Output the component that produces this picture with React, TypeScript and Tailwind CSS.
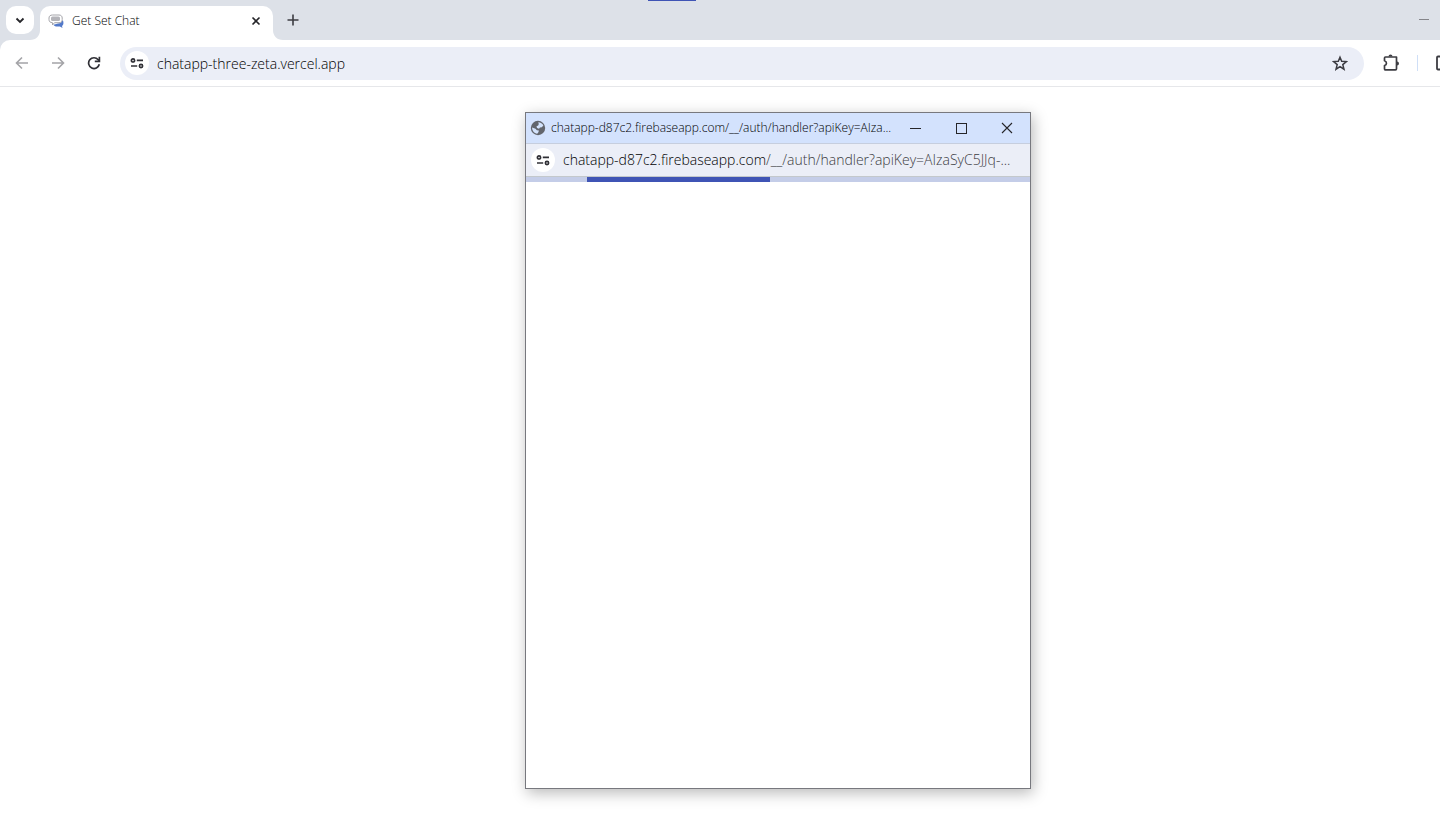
import { type ReactNode } from "react";

function IconButton({ label, className = "", children }: { label: string; className?: string; children: ReactNode }) {
  return (
    <button type="button" aria-label={label} className={`flex shrink-0 items-center justify-center ${className}`}>
      {children}
    </button>
  );
}

function TuneIcon() {
  return (
    <svg width="14" height="14" viewBox="0 0 14 14" fill="none" stroke="#303036" strokeWidth="1.7">
      <circle cx="3" cy="4.4" r="1.6" />
      <path d="M6.800 4.400h6.200M1 10h6.200" />
      <circle cx="11" cy="10" r="1.6" />
    </svg>
  );
}

function ChatIcon() {
  return (
    <svg width="16" height="16" viewBox="0 0 16 16" fill="none">
      <path d="M10 10.500c2.500 0 4-1.200 4.600-3.500.7.800.9 2 .8 3.500-.1 1.300-.6 2-1.400 2.400l.5 2.100-2.600-1.500H9c-1.600 0-3-.6-3.500-1.800z" fill="#5279c9" />
      <path d="M4.500 2H11c2 0 3.200 1.200 3.200 3v1.500c0 2-1.200 3.200-3.200 3.200H6.500L4.500 12V9.700C2.200 9.700 1 8.500 1 6.500V5c0-1.800 1.200-3 3.500-3z" fill="#fff" stroke="#a5a5aa" />
      <rect x="3" y="3.500" width="9" height="4.500" rx="1.500" fill="#b4b4b9" />
    </svg>
  );
}

function GlobeIcon() {
  return (
    <svg className="shrink-0" width="16" height="16" viewBox="0 0 16 16">
      <circle cx="8" cy="8" r="7.2" fill="#62656c" />
      <path d="M8.200 2.200c2.300 0 4.500 1.400 5.200 3.300L11.800 7.200l-1.800.2-1 1.300-2-.7-.5-1.700 1.700-.8.600-1.400z" fill="#d3e3fd" />
      <path d="M2.100 7.500 5.500 8.700l1.400 1.600 2 .3-.5 1.700-1.200 1.500C4.300 13.400 2 10.800 2.100 7.500z" fill="#d3e3fd" />
    </svg>
  );
}

function TabStrip() {
  return (
    <div className="flex h-10 items-end bg-[#dde1e8]">
      <IconButton label="Search tabs" className="mb-1.5 ml-1.5 size-7 rounded-[10px] bg-white">
        <svg width="10" height="7" viewBox="0 0 10 7" fill="none" stroke="#252529" strokeWidth="1.8">
          <path d="m1.500 1.500 3.500 3.500 3.500-3.500" />
        </svg>
      </IconButton>
      <div className="relative ml-1.5 flex h-[34px] w-[233px] shrink-0 items-center rounded-t-[10px] bg-white pb-1 pl-2 pr-2.5">
        <svg className="absolute -left-2.5 bottom-0" width="10" height="10" viewBox="0 0 10 10">
          <path d="M10 0v10H0C6 10 10 6 10 0z" fill="#fff" />
        </svg>
        <svg className="absolute -right-2.5 bottom-0" width="10" height="10" viewBox="0 0 10 10">
          <path d="M0 0v10h10C4 10 0 6 0 0z" fill="#fff" />
        </svg>
        <ChatIcon />
        <span className="ml-2 flex-1 truncate text-[12px] font-light leading-4 text-black">Get Set Chat</span>
        <IconButton label="Close tab" className="size-3.5">
          <svg width="10" height="10" viewBox="0 0 10 10" fill="none" stroke="#252529" strokeWidth="1.6">
            <path d="m1.500 1.500 7 7m0-7-7 7" />
          </svg>
        </IconButton>
      </div>
      <IconButton label="New tab" className="mb-3 ml-3 size-4">
        <svg width="12" height="12" viewBox="0 0 12 12" fill="none" stroke="#3c3c42" strokeWidth="1.6">
          <path d="M6 .5v11M.5 6h11" />
        </svg>
      </IconButton>
      <IconButton label="Minimize" className="mb-3 ml-auto mr-2 size-4">
        <svg width="10" height="2" viewBox="0 0 10 2">
          <path d="M0 .5h10" stroke="#85858a" />
        </svg>
      </IconButton>
    </div>
  );
}

function Toolbar() {
  return (
    <div className="bg-[#dde1e8]">
      <div className="flex h-[47px] items-center overflow-hidden rounded-tl-[10px] border-b border-[#e6e7ea] bg-white">
        <IconButton label="Back" className="ml-3.5 size-4">
          <svg width="14" height="14" viewBox="0 0 14 14" fill="none" stroke="#a4a4a8" strokeWidth="1.6">
            <path d="M13 7H2m5-5.500L1.500 7 7 12.500" />
          </svg>
        </IconButton>
        <IconButton label="Forward" className="ml-5 size-4">
          <svg width="14" height="14" viewBox="0 0 14 14" fill="none" stroke="#a4a4a8" strokeWidth="1.6">
            <path d="M1 7h11M7 1.500 12.500 7 7 12.500" />
          </svg>
        </IconButton>
        <IconButton label="Reload" className="ml-5 size-4">
          <svg width="14" height="14" viewBox="0 0 14 14" fill="none" stroke="#303036" strokeWidth="1.7">
            <path d="M12.300 8.300A5.400 5.400 0 1 1 11.200 3.700L12.500 5" />
            <path d="M12.400.8v4.600H7.800" />
          </svg>
        </IconButton>
        <div className="ml-[18px] flex h-[33px] flex-1 items-center rounded-full bg-[#ebeef7] pl-[5px] pr-4">
          <IconButton label="View site information" className="size-6 rounded-full bg-white">
            <TuneIcon />
          </IconButton>
          <input
            aria-label="Address"
            className="ml-2 min-w-0 flex-1 bg-transparent pt-0.5 text-[14px] font-light leading-5 text-black outline-none"
            defaultValue="chatapp-three-zeta.vercel.app"
          />
          <IconButton label="Bookmark this tab" className="size-4">
            <svg width="16" height="16" viewBox="0 0 16 16" fill="none" stroke="#3c3c42" strokeWidth="1.500">
              <path d="m8 2.200 1.700 4.100 4.700.3-3.600 3 1.200 4.600-4-2.600-4 2.600 1.200-4.600-3.600-3 4.700-.3z" />
            </svg>
          </IconButton>
        </div>
        <div className="flex w-[76px] shrink-0 items-center overflow-hidden">
          <IconButton label="Extensions" className="ml-[18px] size-[18px]">
            <svg width="18" height="18" viewBox="0 0 18 18" fill="none" stroke="#3c3c42" strokeWidth="1.700">
              <path d="M3.500 3h11v11.800c0 .6-.4 1-1 1h-10c-.6 0-1-.4-1-1v-3.300c2.600-.8 2.600-3.900 0-4.700V4c0-.6.4-1 1-1z" strokeLinejoin="round" />
              <path d="M6.500 2.500a2 2 0 0 1 4 0zM15 7.400a2 2 0 0 1 0 4z" fill="#3c3c42" stroke="none" />
            </svg>
          </IconButton>
          <div className="ml-[17px] h-4 w-px shrink-0 bg-[#cfdff7]" />
          <IconButton label="Side panel" className="ml-[18px] h-4 w-[18px]">
            <svg width="18" height="16" viewBox="0 0 18 16" fill="none" stroke="#3c3c42" strokeWidth="1.800">
              <rect x="1" y="1.500" width="16" height="13" rx="1" />
            </svg>
          </IconButton>
        </div>
      </div>
    </div>
  );
}

function AuthPopup() {
  return (
    <section className="absolute left-[525px] top-[25px] flex h-[677px] w-[506px] flex-col border border-[#77787e] bg-white shadow-[2px_4px_14px_rgba(0,0,0,0.28)]">
      <header className="flex h-[30px] shrink-0 items-center bg-[#d3e2fd] pl-1">
        <GlobeIcon />
        <h1 className="ml-[5px] flex-1 whitespace-nowrap text-[12px] font-light leading-4 text-black">
          chatapp-d87c2.firebaseapp.com/__/auth/handler?apiKey=AIza...
        </h1>
        <IconButton label="Minimize popup" className="h-full w-[46px]">
          <svg width="12" height="12" viewBox="0 0 12 12" stroke="#252529">
            <path d="M1 6.500h11" />
          </svg>
        </IconButton>
        <IconButton label="Maximize popup" className="h-full w-[46px]">
          <svg width="12" height="12" viewBox="0 0 12 12" fill="none" stroke="#252529">
            <rect x="1.500" y="1.500" width="10" height="10" />
          </svg>
        </IconButton>
        <IconButton label="Close popup" className="h-full w-[46px]">
          <svg width="12" height="12" viewBox="0 0 12 12" stroke="#252529" strokeWidth="1.1">
            <path d="m1 1 10 10m0-10L1 11" />
          </svg>
        </IconButton>
      </header>
      <div className="flex h-[34px] shrink-0 items-center border-b border-t border-b-[#c3c8cc] border-t-[#c6cede] bg-[#ebeef7] pl-[5px]">
        <IconButton label="View popup site information" className="size-6 rounded-full bg-white">
          <TuneIcon />
        </IconButton>
        <p className="ml-2 whitespace-nowrap text-[14px] font-light leading-5 text-[#3c3c42]">
          <span className="text-black">chatapp-d87c2.firebaseapp.com</span>/__/auth/handler?apiKey=AIzaSyC5JJq-...
        </p>
      </div>
      <div role="progressbar" aria-label="Loading" className="h-[5px] shrink-0 bg-[#c4cde8]">
        <div className="ml-[61px] h-full w-[183px] bg-[#3f54b5]" />
      </div>
    </section>
  );
}

export default function App() {
  return (
    <div className="relative flex min-h-screen flex-col overflow-hidden bg-white font-['Open_Sans','Noto_Sans',sans-serif]">
      <TabStrip />
      <div className="absolute left-[45%] top-0 h-px w-12 bg-[#3f54b5]" />
      <Toolbar />
      <main className="relative flex-1">
        <AuthPopup />
      </main>
    </div>
  );
}
